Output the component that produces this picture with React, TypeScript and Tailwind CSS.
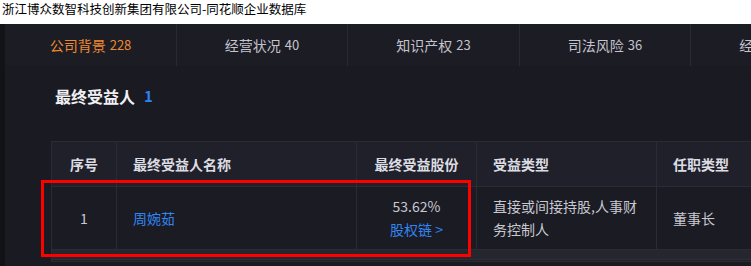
import React from "react";

const tabs = [
  { label: "公司背景", num: "228", w: "w-[172px]", active: true },
  { label: "经营状况", num: "40", w: "w-[171px]" },
  { label: "知识产权", num: "23", w: "w-[172px]" },
  { label: "司法风险", num: "36", w: "w-[171px]" },
  { label: "经营风险", num: "12", w: "w-[172px]" },
];

export default function App() {
  return (
    <div
      className="relative w-[751px] h-[266px] overflow-hidden bg-[#1a1a22]"
      style={{ fontFamily: '"Noto Sans CJK SC", "Noto Sans", sans-serif' }}
    >
      <div className="h-[24px] bg-white text-black text-[12.5px] leading-[17px] pl-[2px] whitespace-nowrap">
        浙江博众数智科技创新集团有限公司-同花顺企业数据库
      </div>
      <div className="flex h-[242px]">
        <div className="w-[5px] shrink-0 bg-[#121217]" />
        <div className="flex-1 min-w-0 flex flex-col">
          <div className="flex h-[43px] shrink-0 bg-[#1c1c25] border-b border-[#19191f]">
            {tabs.map((t) => (
              <div
                key={t.label}
                className={`${t.w} shrink-0 flex items-center justify-center border-r border-[#2a2a33] text-[14px] whitespace-nowrap ${
                  t.active ? "text-[#ee8a2f]" : "text-[#c4c4cc]"
                }`}
              >
                <span>{t.label}</span>
                <span className="ml-[4px] text-[13px]">{t.num}</span>
              </div>
            ))}
          </div>
          <div className="flex-1 bg-[#1a1a22] pl-[50px] pt-[17px]">
            <div className="flex items-center h-[24px]">
              <span className="text-[16px] font-bold text-[#f0f0f4]">最终受益人</span>
              <span className="ml-[9px] text-[15px] font-bold text-[#2f82f2]">1</span>
            </div>
          </div>
        </div>
      </div>

      {/* table */}
      <div className="absolute left-[51px] top-[141px] w-[760px]">
        <div className="grid grid-cols-[65px_240px_120px_180px_155px] h-[45px] border-t border-[#2b2b35] bg-[#20202a] text-[14px] font-bold text-[#dcdde3]">
          <div className="border-l border-[#2b2b35] flex items-center justify-center">序号</div>
          <div className="border-l border-[#2b2b35] flex items-center pl-[16px]">最终受益人名称</div>
          <div className="border-l border-[#2b2b35] flex items-center justify-center">最终受益股份</div>
          <div className="border-l border-[#2b2b35] flex items-center pl-[16px]">受益类型</div>
          <div className="border-l border-[#2b2b35] flex items-center pl-[16px]">任职类型</div>
        </div>
        <div className="grid grid-cols-[65px_240px_120px_180px_155px] h-[63px] border-t border-[#2b2b35] bg-[#1b1b24] text-[14px] text-[#c8c9d0]">
          <div className="border-l border-[#2b2b35] flex items-center justify-center">1</div>
          <div className="border-l border-[#2b2b35] flex items-center pl-[16px] text-[#3186f2]">周婉茹</div>
          <div className="border-l border-[#2b2b35] flex flex-col items-center justify-center leading-[23px]">
            <span>53.62%</span>
            <span className="text-[#3186f2]">股权链 &gt;</span>
          </div>
          <div className="border-l border-[#2b2b35] flex items-center pl-[16px] pr-[14px] leading-[23px]">
            直接或间接持股,人事财务控制人
          </div>
          <div className="border-l border-[#2b2b35] flex items-center pl-[16px]">董事长</div>
        </div>
        <div className="h-[13px] border-t border-[#2b2b35] border-l border-b bg-[#1f1f27] flex flex-col">
          <div className="h-[9px] bg-[#26262e]" />
          <div className="h-px bg-[#2e2e38]" />
        </div>
      </div>

      {/* red annotation box */}
      <div className="absolute left-[41px] top-[180px] w-[430px] h-[77px] border-[3px] border-[#ff0000]" />
    </div>
  );
}
